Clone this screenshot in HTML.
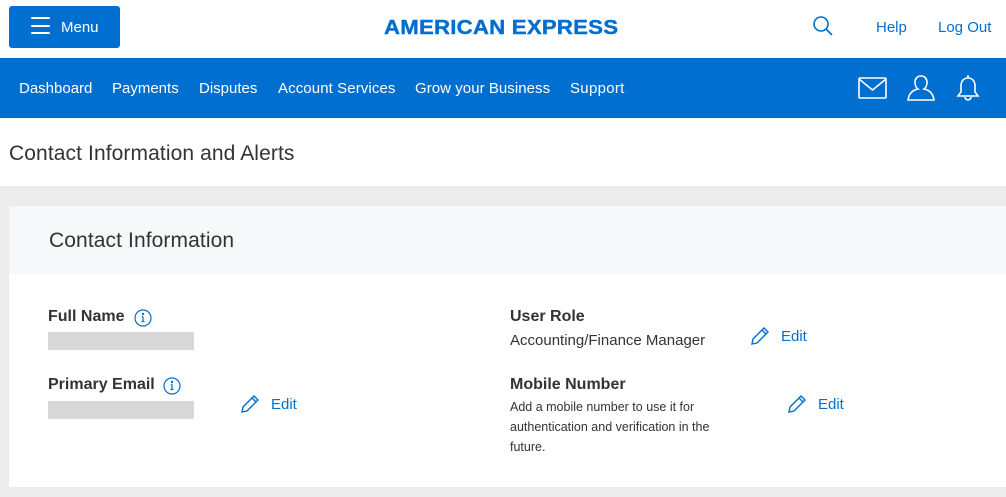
<!DOCTYPE html>
<html><head><style>
*{margin:0;padding:0;box-sizing:border-box}
body{width:1006px;height:497px;overflow:hidden;font-family:"Liberation Sans",Arial,sans-serif;background:#ececec;position:relative;color:#333}
.a{position:absolute;white-space:nowrap}
.blue{color:#006fcf}
.n{position:absolute;top:80px;color:#fff;font-size:15px;white-space:nowrap}
</style></head><body>
<div class="a" style="left:0;top:0;width:1006px;height:58px;background:#fff"></div>
<div class="a" style="left:9px;top:6px;width:111px;height:42px;background:#006fcf;border-radius:3px"></div>
<div class="a" style="left:31px;top:17px;width:19px;height:2px;background:#fff;border-radius:1px"></div>
<div class="a" style="left:31px;top:25px;width:19px;height:2px;background:#fff;border-radius:1px"></div>
<div class="a" style="left:31px;top:32px;width:19px;height:2px;background:#fff;border-radius:1px"></div>
<div class="a" style="left:61px;top:19px;color:#fff;font-size:15px">Menu</div>
<div class="a blue" style="left:384px;top:17px;font-size:20px;font-weight:bold;letter-spacing:0.2px;transform:scaleX(1.11);transform-origin:left;-webkit-text-stroke:0.4px #006fcf">AMERICAN EXPRESS</div>
<svg class="a" style="left:812px;top:15px" width="22" height="22" viewBox="0 0 22 22" fill="none" stroke="#006fcf" stroke-width="1.6"><circle cx="9" cy="9" r="7"/><path d="M14 14l6 6"/></svg>
<div class="a blue" style="left:876px;top:19px;font-size:15px">Help</div>
<div class="a blue" style="left:938px;top:19px;font-size:15px">Log Out</div>
<div class="a" style="left:0;top:58px;width:1006px;height:60px;background:#006fcf"></div>
<span class="n" style="left:19px">Dashboard</span>
<span class="n" style="left:112px">Payments</span>
<span class="n" style="left:199px">Disputes</span>
<span class="n" style="left:278px;letter-spacing:0.1px">Account Services</span>
<span class="n" style="left:415px;letter-spacing:0.05px">Grow your Business</span>
<span class="n" style="left:570px;letter-spacing:0.3px">Support</span>
<svg class="a" style="left:858px;top:77px" width="30" height="22" viewBox="0 0 30 22" fill="none" stroke="#fff" stroke-width="1.6"><rect x="1" y="1" width="27" height="20" rx="1"/><path d="M1 2l13.5 11L28 2"/></svg>
<svg class="a" style="left:907px;top:75px" width="28" height="27" viewBox="0 0 28 27" fill="none" stroke="#fff" stroke-width="1.6"><path d="M14 1c-4 0-6 3-6 6.5 0 3 1.5 5.5 3 6.5-5 1-9 4-10 11h26c-1-7-5-10-10-11 1.5-1 3-3.5 3-6.5C20 4 18 1 14 1z"/></svg>
<svg class="a" style="left:956px;top:73px" width="24" height="30" viewBox="0 0 24 30" fill="none" stroke="#fff" stroke-width="1.6"><path d="M12 2v3M12 5c-5 0-7 4-7 8v6l-3 4h20l-3-4v-6c0-4-2-8-7-8zM9 24a3 3 0 006 0"/></svg>
<div class="a" style="left:0;top:118px;width:1006px;height:68px;background:#fff"></div>
<div class="a" style="left:9px;top:142px;font-size:21px;color:#333;letter-spacing:0.1px">Contact Information and Alerts</div>
<div class="a" style="left:9px;top:206px;width:997px;height:68px;background:#f7f8f9"></div>
<div class="a" style="left:49px;top:229px;font-size:21px;color:#333;letter-spacing:0.1px">Contact Information</div>
<div class="a" style="left:9px;top:274px;width:997px;height:213px;background:#fff"></div>
<div class="a" style="left:48px;top:308px;font-size:16px;font-weight:bold">Full Name</div>
<svg class="a" style="left:134px;top:309px" width="18" height="18" viewBox="0 0 18 18" fill="none" stroke="#006fcf" stroke-width="1.2"><circle cx="9" cy="9" r="8"/><path d="M9 7.5v5M7.5 12.5h3M7.8 7.5h1.2"/><circle cx="9" cy="5" r=".6" fill="#006fcf"/></svg>
<div class="a" style="left:48px;top:332px;width:146px;height:18px;background:#d8d8d8"></div>
<div class="a" style="left:48px;top:376px;font-size:16px;font-weight:bold">Primary Email</div>
<svg class="a" style="left:163px;top:377px" width="18" height="18" viewBox="0 0 18 18" fill="none" stroke="#006fcf" stroke-width="1.2"><circle cx="9" cy="9" r="8"/><path d="M9 7.5v5M7.5 12.5h3M7.8 7.5h1.2"/><circle cx="9" cy="5" r=".6" fill="#006fcf"/></svg>
<div class="a" style="left:48px;top:401px;width:146px;height:18px;background:#d8d8d8"></div>
<svg class="a" style="left:240px;top:394px" width="20" height="20" viewBox="0 0 20 20" fill="none" stroke="#006fcf" stroke-width="1.4"><path d="M2 18l1-5L14 2l4 4L7 17z M12 4l4 4"/></svg>
<div class="a blue" style="left:271px;top:396px;font-size:15px">Edit</div>
<div class="a" style="left:510px;top:308px;font-size:16px;font-weight:bold">User Role</div>
<div class="a" style="left:510px;top:332px;font-size:15px">Accounting/Finance Manager</div>
<svg class="a" style="left:750px;top:326px" width="20" height="20" viewBox="0 0 20 20" fill="none" stroke="#006fcf" stroke-width="1.4"><path d="M2 18l1-5L14 2l4 4L7 17z M12 4l4 4"/></svg>
<div class="a blue" style="left:781px;top:328px;font-size:15px">Edit</div>
<div class="a" style="left:510px;top:376px;font-size:16px;font-weight:bold">Mobile Number</div>
<div class="a" style="left:510px;top:397px;font-size:12.5px;line-height:20px;width:230px;white-space:normal">Add a mobile number to use it for authentication and verification in the future.</div>
<svg class="a" style="left:787px;top:394px" width="20" height="20" viewBox="0 0 20 20" fill="none" stroke="#006fcf" stroke-width="1.4"><path d="M2 18l1-5L14 2l4 4L7 17z M12 4l4 4"/></svg>
<div class="a blue" style="left:818px;top:396px;font-size:15px">Edit</div>
</body></html>
